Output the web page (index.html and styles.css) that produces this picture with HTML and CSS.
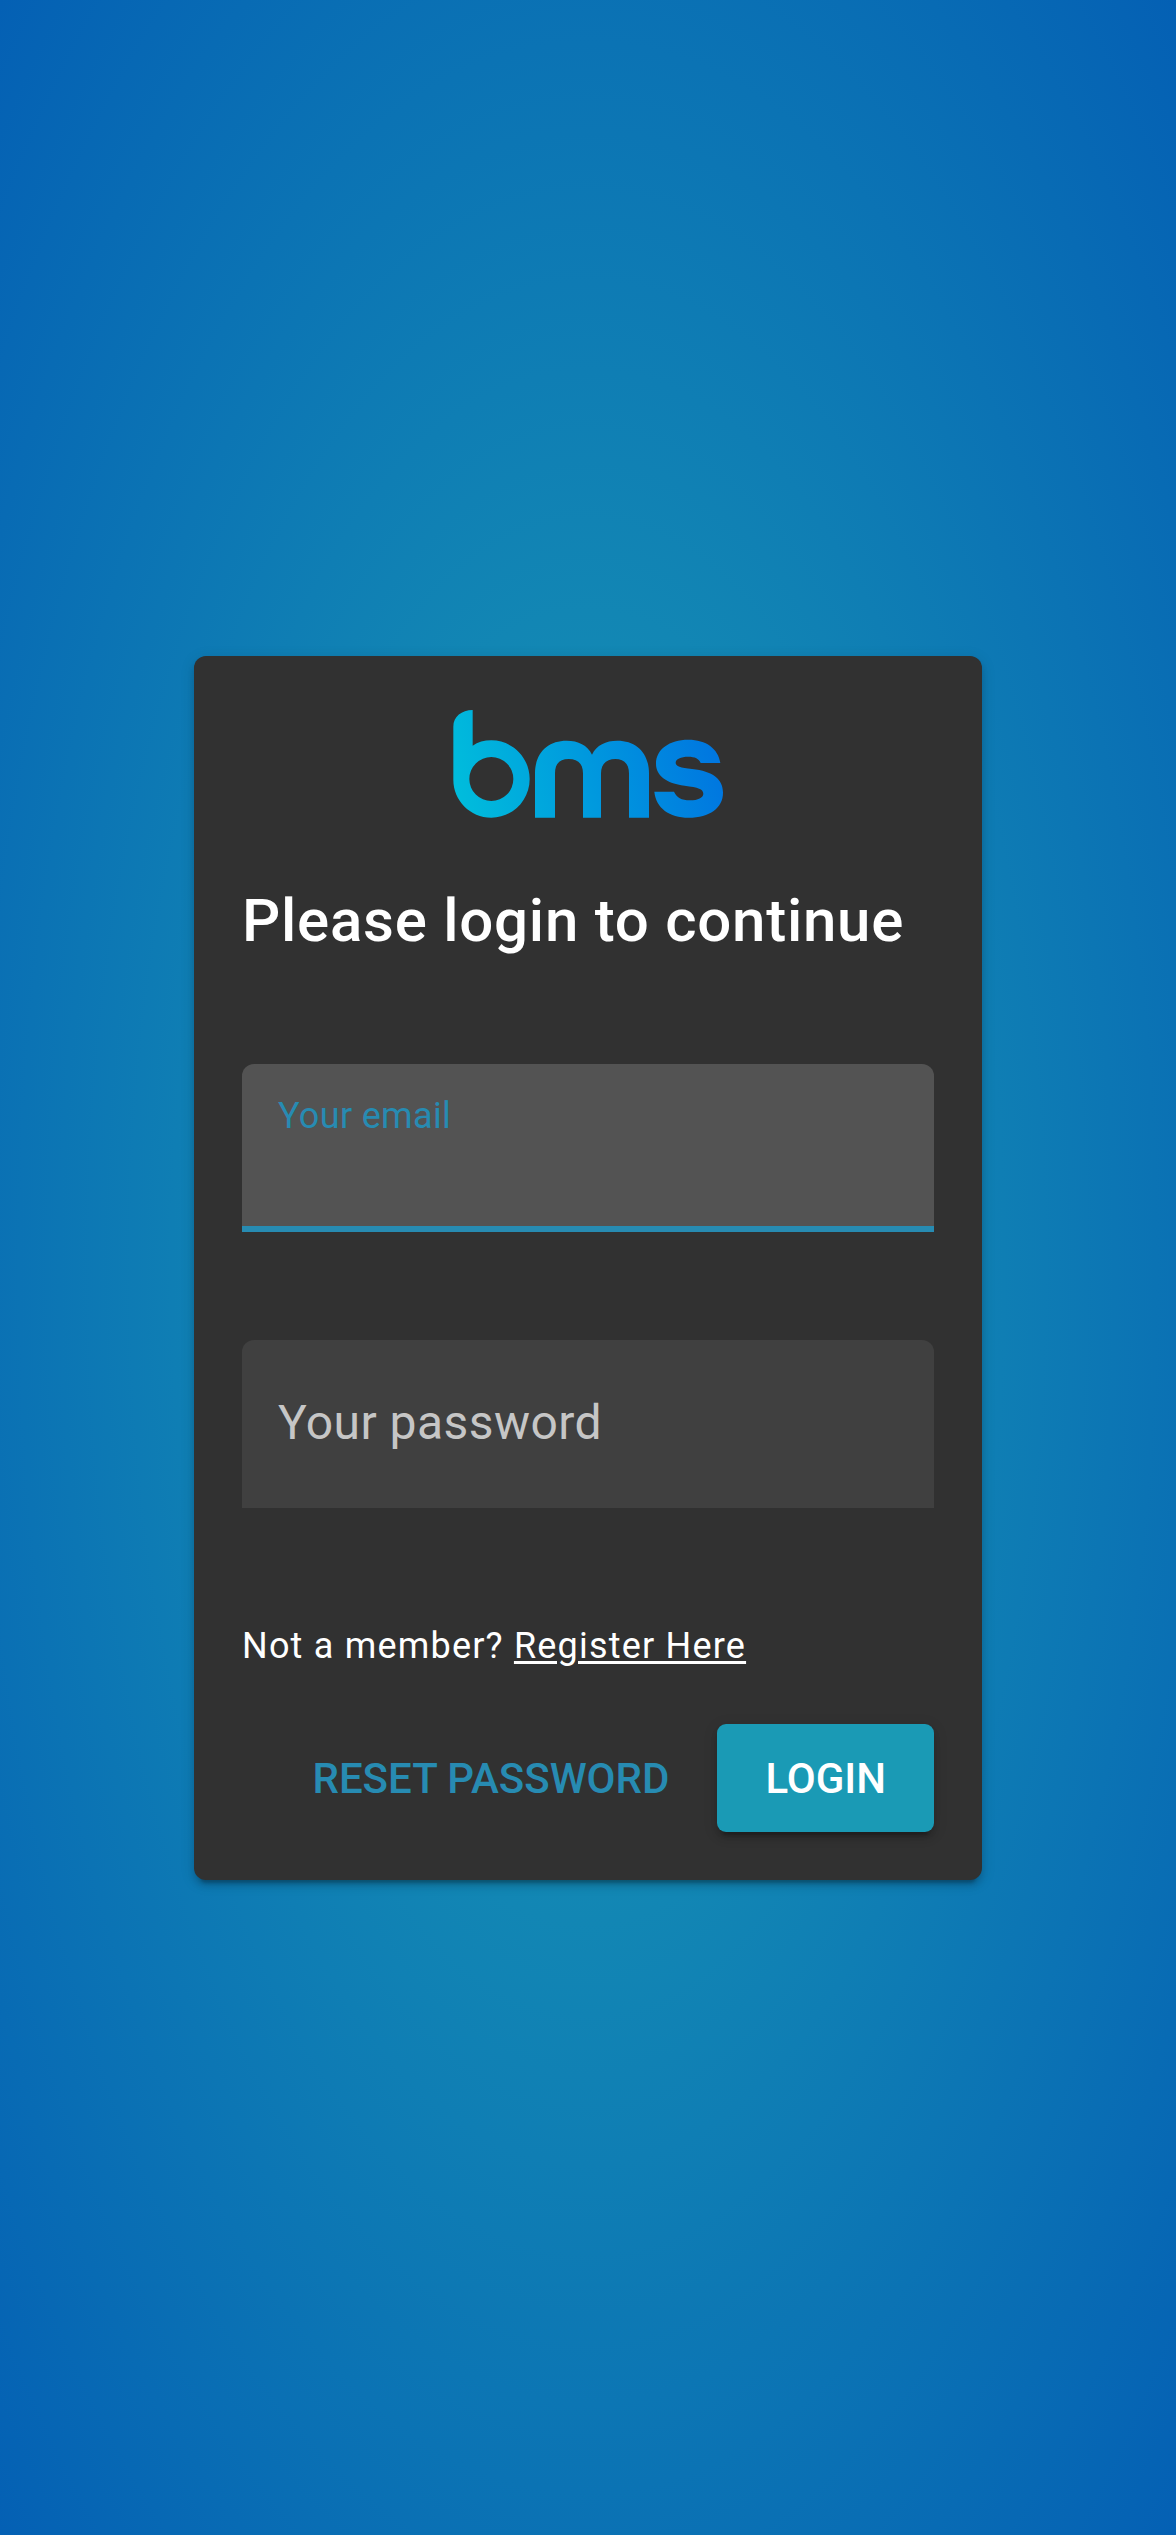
FILE: index.html
```html
<!DOCTYPE html>
<html lang="en">
<head>
<meta charset="utf-8">
<title>Login</title>
<link rel="stylesheet" href="styles.css">
</head>
<body>
<div class="page">
<main class="card">
  <svg class="logo" viewBox="0 0 900 360" role="img" aria-label="bms">
    <defs>
      <linearGradient id="brand" gradientUnits="userSpaceOnUse" x1="60" y1="280" x2="810" y2="90">
        <stop offset="0" stop-color="#00bcdc"/>
        <stop offset="1" stop-color="#0077e0"/>
      </linearGradient>
    </defs>
    <g fill="url(#brand)">
      <path fill-rule="evenodd" d="M40 225V65C40 35 65 15 98 15V122C113 111 133 106 154 106C218 106 269 158 269 222S218 338 154 338S40 286 40 225ZM154 156A66 66 0 1 0 154 288A66 66 0 1 0 154 156Z"/>
      <path d="M285 338V205C285 145 322 107 380 107C415 107 442 120 456 149C470 120 497 107 532 107C590 107 627 145 627 205V338H567V205C567 176 551 162 526 162S483 176 483 205V338H429V205C429 176 413 162 386 162S345 176 345 205V338Z"/>
      <path d="M841 174C835 131 798 104 745 104C688 104 648 133 648 176C648 211 678 235 734 242C775 247 790 252 790 266C790 278 774 286 750 286C724 286 710 277 702 260H643C648 309 688 338 746 338C809 338 849 308 849 263C849 221 818 199 756 192C721 188 707 184 707 173C707 162 722 155 745 155C765 155 777 161 782 174Z"/>
    </g>
  </svg>
  <h1 class="title">Please login to continue</h1>
  <form class="form">
    <label class="field field-focused">Your email</label>
    <label class="field">Your password</label>
    <p class="hint">Not a member? <a class="link" href="#">Register Here</a></p>
    <div class="actions">
      <button class="button" type="button">RESET PASSWORD</button>
      <button class="button button-raised" type="button">LOGIN</button>
    </div>
  </form>
</main>
</div>
</body>
</html>
```
FILE: styles.css
```css
* { box-sizing: border-box; }
body {
  margin: 0;
  height: 2538px;
  background: #fff;
  font-family: Roboto, sans-serif;
  color: #fff;
}
.page {
  height: 2535px;
  display: flex;
  flex-direction: column;
  align-items: center;
  padding-top: 656px;
  background: radial-gradient(ellipse farthest-corner, #1a9cb4 0%, #0460b4 100%);
}
.card {
  width: 788px;
  height: 1224px;
  padding: 48px;
  border-radius: 12px;
  background: #313131;
  box-shadow: 0 9px 3px -6px rgba(0,0,0,.2), 0 6px 6px rgba(0,0,0,.14), 0 3px 15px rgba(0,0,0,.12);
}
.logo { display: block; width: 300px; height: 120px; margin: 1px 0 0 198px; }
.title { margin: 48px 0 0; font-size: 60px; line-height: 95px; font-weight: 500; letter-spacing: .75px; white-space: nowrap; }
.form { display: flex; flex-direction: column; }
.field {
  display: block;
  height: 168px;
  padding: 0 36px;
  border-radius: 12px 12px 0 0;
  background: #404040;
  color: #c6c6c6;
  font-size: 48px;
  line-height: 165px;
  letter-spacing: .45px;
}
.field-focused {
  margin: 96px 0 108px;
  border-bottom: 6px solid #278bb2;
  background: #535353;
  color: #278bb2;
  font-size: 36px;
  line-height: 104px;
  letter-spacing: .34px;
}
.hint { margin: 108px 0 0; font-size: 36px; line-height: 60px; letter-spacing: 1.2px; }
.link { color: inherit; text-decoration-thickness: 3px; text-underline-offset: 3px; }
.actions { display: flex; justify-content: flex-end; margin-top: 48px; }
.button {
  height: 108px;
  padding: 1px 48px 0;
  border: 0;
  border-radius: 9px;
  background: none;
  color: #278bb2;
  font: 500 42px/107px Roboto, sans-serif;
  letter-spacing: 0;
}
.button-raised {
  background: #1a9ab5;
  color: #fff;
  box-shadow: 0 9px 3px -6px rgba(0,0,0,.2), 0 6px 6px rgba(0,0,0,.14), 0 3px 15px rgba(0,0,0,.12);
}
```
